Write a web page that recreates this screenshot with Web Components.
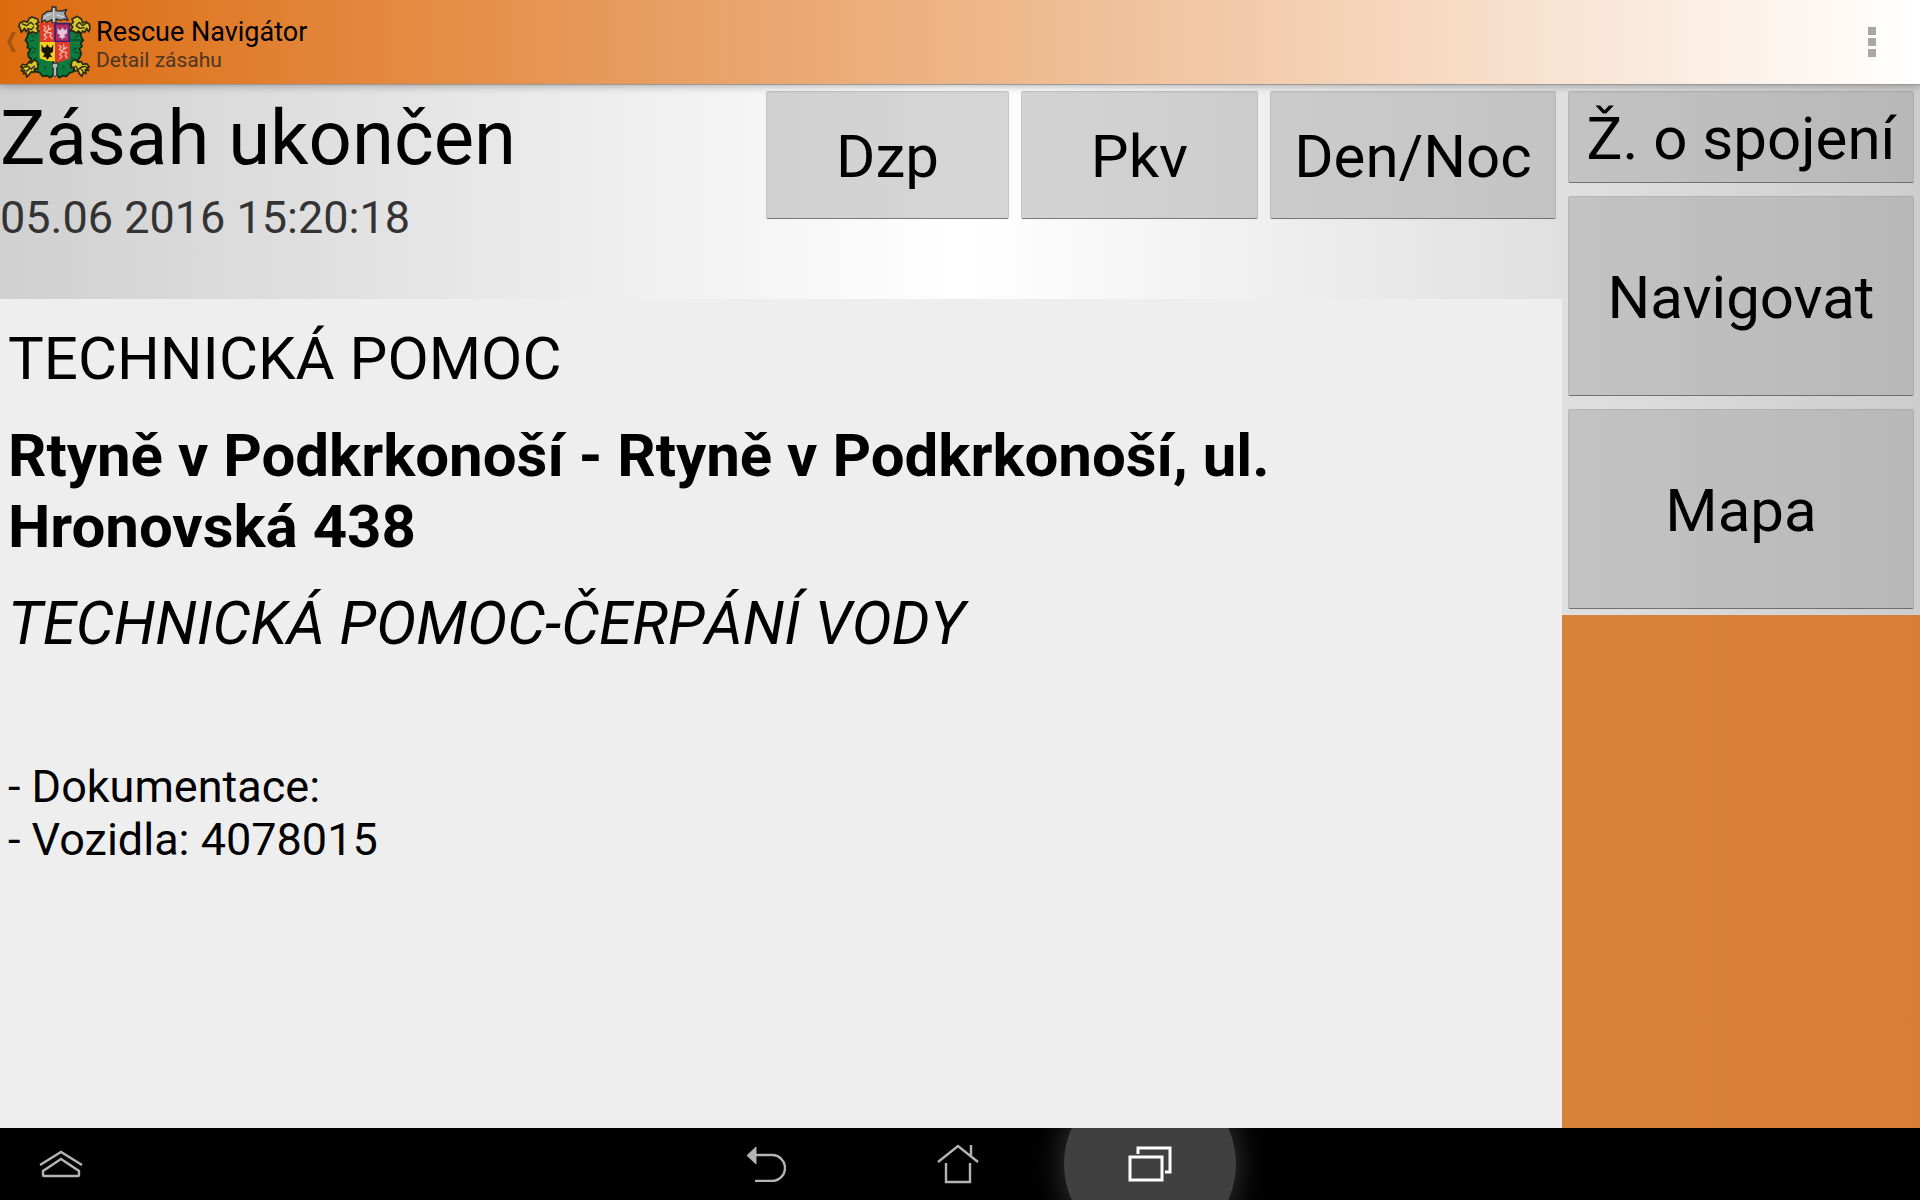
<!DOCTYPE html>
<html lang="cs">
<head>
<meta charset="utf-8">
<title>Rescue Navigátor</title>
<style>
  body {
    margin: 0;
    font-family: Roboto, "Liberation Sans", sans-serif;
    color: #000;
  }
</style>
</head>
<body>
<rescue-app></rescue-app>

<script>
// Top bar with the up link, the crest and the overflow menu
class AppBar extends HTMLElement {
    constructor(){
        super();
        var shadow = this.attachShadow({mode: 'open'});
        shadow.innerHTML = `
        <style>
        :host {
            display: flex;
            align-items: center;
            height: 84px;
            position: relative;
            z-index: 1;
            background: linear-gradient(to right, #dc6b0f, #fff);
            box-shadow: 0 1px 0 #999, 0 2px 8px rgba(0,0,0,0.3);
        }
        a {
            display: flex;
            align-items: center;
            padding-left: 6px;
            color: inherit;
            text-decoration: none;
        }
        .up { width: 12px; height: 22px; }
        .crest { width: 74px; height: 74px; }
        .names { padding: 4px 0 0 4px; }
        .title { display: block; font-size: 27px; line-height: 32px; }
        .subtitle { display: block; font-size: 21px; line-height: 25px; color: #4b3622; }
        button {
            margin-left: auto;
            width: 96px;
            height: 84px;
            padding: 0;
            border: 0;
            background: none;
        }
        button svg { display: block; margin: auto; }
        </style>
        <a href="#" aria-label="Zpět">
          <svg class="up" viewBox="0 0 12 22"><path d="M6 1h4L5 11l5 10H6L1 11z" fill="#a5540f"/></svg>
          <svg class="crest" viewBox="54 14 222 222" stroke-linejoin="round">
            <g fill="#0f7a3e" stroke="#052c17" stroke-width="5">
              <path d="M118 92l-14-4-10 8-10 2-2 12-6 10 8 10-2 12 10 4-8 12 2 12 8 6-6 10 6 12 10 2 2 14 12 2 10 12 14-2 8 6 10-8V92z"/>
              <path d="M208 92l14-4 8 8 10 2 4 12 6 10-8 8 4 10-8 8 6 12-4 12-6 8 4 12-8 8-8 2-2 14-12 4-8 10-12-2-10 6-8-8V92z"/>
            </g>
            <g fill="none" stroke="#073d20" stroke-width="3">
              <path d="M92 104l12 6M88 122l14-2M94 140l16 8M92 160l14-8M100 178l12-6M112 196l10-8M132 208l6-12"/>
              <path d="M236 104l-12 8M246 119h-34M232 142l-14 8M238 160l-16-6M224 178l-10-6M214 196l-8-8M194 206l-6-10"/>
            </g>
            <g fill="#d6c62d" stroke="#2d270b" stroke-width="5">
              <path d="M116 92l-8 8-10-6-8 4-6-10-6 6-4-10-10 12-4-14-4-4 4-10 12-6 10 4 6-12 8-4 16 6 4 10-8 4 8 8-6 6z"/>
              <path d="M212 90l6-10-6-8 8-6-4-10 16-8 12 8 4 12 10-4 10 8 2 12-4 10-6-10-6 12-6-4-4 8-8-8-8 6-8-6z"/>
              <path d="M112 184l-10-6-8 10-8-2-6 8-12-2-6 8 8 2-6 10 10-2-4 10 8-2 2 12 8-8 6-8 8 2 2-12 10 2z"/>
              <path d="M216 182l10-4 8 8 10-2 4 8 12-2 8 10-8 2 6 8-10-2 2 12-8-4-4 12-8-8-4-10-10 2-2-12-10 2z"/>
            </g>
            <g fill="none" stroke="#2d270b" stroke-width="4">
              <path d="M66 70l14 6 12-10 10 8M82 84l12 4 8-10M260 68l-12 8-10-10-10 10M254 82l-14 2-12-8"/>
              <path d="M72 200l12-2 10 8 10-10M78 214l12-10M258 198l-14 2-10 8-8-12M250 214l-10-12"/>
            </g>
            <path d="M125 66l2-22 14-10 15-2V20h12v11l18 1 14-5-6 12 10 21-12-4-10 4-14-4v12h-12V58l-16 8-6-7z" fill="#a4a8ab" stroke="#25282b" stroke-width="4"/>
            <path d="M130 58l10-12 14-4M170 44l22 6M161 24v40" fill="none" stroke="#dfe2e4" stroke-width="3"/>
            <path d="M119 68h46v57h-46z" fill="#df3b28"/>
            <path d="M165 70h43v54h-43z" fill="#c92350" stroke="#282480" stroke-width="5"/>
            <path d="M119 125h46v58l-23-1-23-8z" fill="#f2d020"/>
            <path d="M165 125h45v49l-22 9-23 4z" fill="#df3b28"/>
            <g fill="none" stroke="#f0b6a6" stroke-width="4">
              <path d="M130 76l8 6-6 8 10 6-10 8 8 6-8 8M144 74l4 14 8-6M142 96l12 2-4 10 8 8M146 84l-6 12"/>
              <path d="M176 134l8 6-6 8 10 6-10 8 8 6-8 8M190 132l4 14 8-6M188 154l12 2-4 10 6 8M192 142l-6 12"/>
            </g>
            <path d="M172 78l6 10 6-2 3-10 4 10 6 2 6-10-1 22-8 4 6 10-8-2-5 8-5-8-8 2 5-10-8-4z" fill="#e9c4d6" stroke="#5a3a8c" stroke-width="2"/>
            <path d="M124 132l7 10 7-2 4-8 5 8 7 2 6-10-1 22-9 6 7 11-8-2-7 9-6-9-8 2 6-11-9-6z" fill="#171408"/>
            <path d="M158 190l-2 8 4 4v22l5 6 5-6v-22l4-4-2-10z" fill="#b6babd" stroke="#30363a" stroke-width="3"/>
          </svg>
          <span class="names">
            <span class="title"><slot name="title"></slot></span>
            <span class="subtitle"><slot name="subtitle"></slot></span>
          </span>
        </a>
        <button type="button" aria-label="Další možnosti">
          <svg width="8" height="30" fill="#a8a9a5"><path d="M0 0h8v8H0zM0 11h8v8H0zM0 22h8v8H0z"/></svg>
        </button>
        `;
    }
}

// Grey translucent button
class HoloButton extends HTMLElement {
    constructor(){
        super();
        var shadow = this.attachShadow({mode: 'open'});
        shadow.innerHTML = `
        <style>
        :host { display: block; }
        button {
            display: block;
            box-sizing: border-box;
            width: 100%;
            height: 100%;
            padding: 3px 0 0;
            border: 1px solid rgba(90,90,90,0.12);
            border-bottom-color: rgba(60,60,60,0.6);
            border-radius: 2px;
            background: rgba(153,153,153,0.4);
            font: inherit;
            font-size: 60px;
            line-height: 71px;
            color: inherit;
            white-space: nowrap;
        }
        </style>
        <button type="button"><slot></slot></button>
        `;
    }
}

// State of the call-out, its time and the row of buttons
class StatusHeader extends HTMLElement {
    constructor(){
        super();
        var shadow = this.attachShadow({mode: 'open'});
        shadow.innerHTML = `
        <style>
        :host {
            display: grid;
            grid-template-columns: 754fr 243fr 237fr 286fr;
            gap: 12px;
            height: 215px;
            padding-right: 6px;
        }
        .state { padding-top: 10px; white-space: nowrap; }
        h1 { margin: 0 0 8px; font-size: 76px; line-height: 89px; font-weight: 400; }
        time { display: block; font-size: 45px; line-height: 53px; color: #333; }
        holo-button { height: 128px; margin-top: 7px; }
        </style>
        <div class="state">
          <h1>Zásah ukončen</h1>
          <time datetime="2016-06-05T15:20:18">05.06 2016 15:20:18</time>
        </div>
        <holo-button>Dzp</holo-button>
        <holo-button>Pkv</holo-button>
        <holo-button>Den/Noc</holo-button>
        `;
    }
}

// Text of the call-out
class IncidentDetail extends HTMLElement {
    constructor(){
        super();
        var shadow = this.attachShadow({mode: 'open'});
        shadow.innerHTML = `
        <style>
        :host {
            display: block;
            padding: 24px 8px;
            background: #eee;
            font-size: 60px;
            line-height: 71px;
        }
        p, h2 { margin: 0 0 26px; font-size: inherit; }
        .kind { font-style: italic; font-kerning: none; }
        .notes { margin-top: 101px; font-size: 45px; line-height: 53px; }
        </style>
        <p>TECHNICKÁ POMOC</p>
        <h2>Rtyně v Podkrkonoší - Rtyně v Podkrkonoší, ul. Hronovská 438</h2>
        <p class="kind">TECHNICKÁ POMOC-ČERPÁNÍ VODY</p>
        <p class="notes">- Dokumentace:<br>- Vozidla: 4078015</p>
        `;
    }
}

// Right column
class SideActions extends HTMLElement {
    constructor(){
        super();
        var shadow = this.attachShadow({mode: 'open'});
        shadow.innerHTML = `
        <style>
        :host { display: flex; flex-direction: column; }
        .list { display: grid; gap: 13px; padding: 7px 6px 6px; }
        holo-button { height: 200px; }
        .short { height: 92px; }
        .rest { flex: 1; background: linear-gradient(to right, #d98239, #d67e35); }
        </style>
        <div class="list">
          <holo-button class="short">Ž. o spojení</holo-button>
          <holo-button>Navigovat</holo-button>
          <holo-button>Mapa</holo-button>
        </div>
        <div class="rest"></div>
        `;
    }
}

// System navigation at the bottom
class SystemBar extends HTMLElement {
    constructor(){
        super();
        var shadow = this.attachShadow({mode: 'open'});
        shadow.innerHTML = `
        <style>
        :host {
            display: flex;
            justify-content: space-between;
            height: 72px;
            padding-right: 4px;
            overflow: hidden;
            background: #000;
        }
        /* same room on both sides keeps the keys in the middle */
        :host::after { content: ""; width: 122px; }
        .keys { display: flex; }
        button {
            position: relative;
            display: flex;
            align-items: center;
            justify-content: center;
            width: 192px;
            height: 72px;
            padding: 0;
            border: 0;
            background: none;
            color: #b4b4b4;
        }
        .menu { width: 122px; }
        svg { position: relative; fill: none; stroke: currentColor; stroke-width: 2.4; }
        .pressed { color: #fff; }
        /* touch highlight, cut by the bar */
        .pressed::before {
            content: "";
            position: absolute;
            left: 10px;
            top: -50px;
            width: 172px;
            height: 172px;
            border-radius: 50%;
            background: #404040;
            box-shadow: 0 0 32px #3c3c3c;
        }
        </style>
        <button type="button" class="menu" aria-label="Nahoru">
          <svg width="44" height="28"><path d="M1 15L22 2l21 13M4 21L22 9l18 12v4q0 1-1 1H5q-1 0-1-1z"/></svg>
        </button>
        <div class="keys">
          <button type="button" aria-label="Zpět">
            <svg width="40" height="36"><path d="M9 9h17a13 13 0 0 1 0 26H9"/><path d="M10 1v17L1 9.500z" fill="currentColor" stroke-width="1"/></svg>
          </button>
          <button type="button" aria-label="Domů">
            <svg width="42" height="40"><path d="M1 18L21 2l20 16M34 1v11M9 19v19h24V19"/></svg>
          </button>
          <button type="button" class="pressed" aria-label="Poslední aplikace">
            <svg width="44" height="36"><path d="M2 11h32v23H2zM10 8V2h32v24h-5" stroke-width="3"/></svg>
          </button>
        </div>
        `;
    }
}

// Whole screen
class RescueApp extends HTMLElement {
    constructor(){
        super();
        var shadow = this.attachShadow({mode: 'open'});
        shadow.innerHTML = `
        <style>
        :host {
            display: grid;
            grid-template-rows: auto 1fr auto;
            min-height: 100vh;
        }
        main {
            display: grid;
            grid-template-columns: 1562fr 358fr;
            background: linear-gradient(to right, #d0d0d0, #fff 50%, #cdcdcd);
        }
        .incident { display: flex; flex-direction: column; min-width: 0; }
        incident-detail { flex: 1; }
        </style>
        <app-bar>
          <span slot="title">Rescue Navigátor</span>
          <span slot="subtitle">Detail zásahu</span>
        </app-bar>
        <main>
          <div class="incident">
            <status-header></status-header>
            <incident-detail></incident-detail>
          </div>
          <side-actions></side-actions>
        </main>
        <system-bar></system-bar>
        `;
    }
}

// Define the elements
customElements.define('app-bar', AppBar);
customElements.define('holo-button', HoloButton);
customElements.define('status-header', StatusHeader);
customElements.define('incident-detail', IncidentDetail);
customElements.define('side-actions', SideActions);
customElements.define('system-bar', SystemBar);
customElements.define('rescue-app', RescueApp);
</script>
</body>
</html>
